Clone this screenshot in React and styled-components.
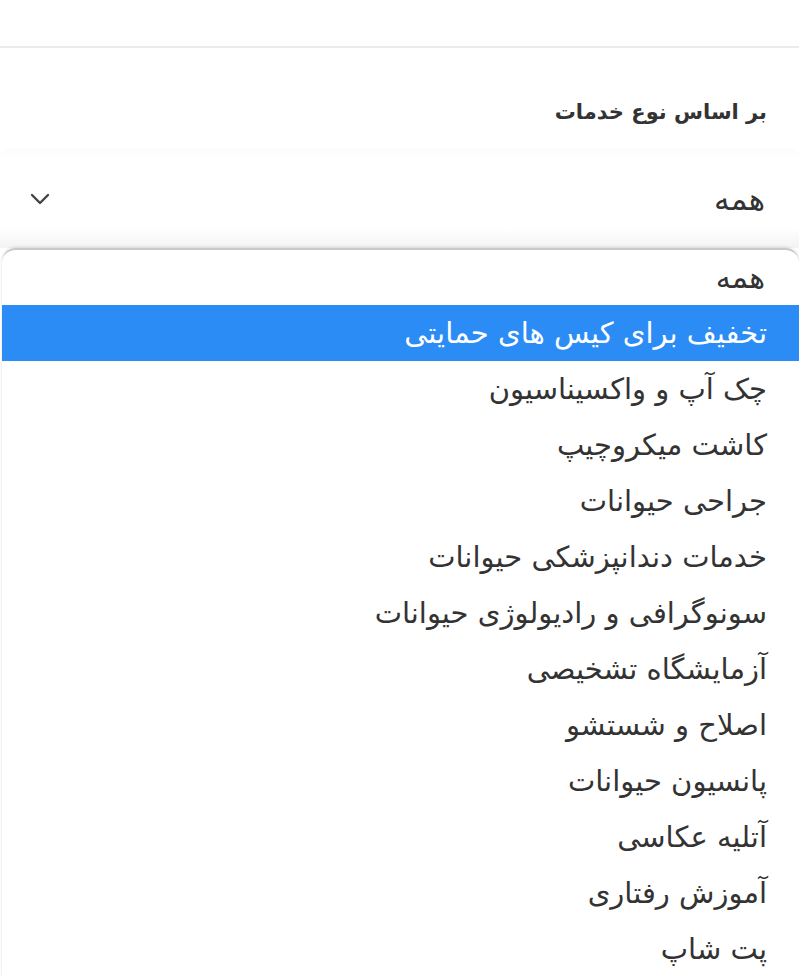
import React from "react";
import styled, { createGlobalStyle } from "styled-components";

const Global = createGlobalStyle`
  html, body { margin: 0; padding: 0; background: #fff; }
  body { font-family: "DejaVu Sans", "Noto Sans", sans-serif; direction: rtl; overflow: hidden; }
`;

const Page = styled.div`
  width: 799px;
  height: 977px;
  overflow: hidden;
  display: flex;
  flex-direction: column;
`;

const Divider = styled.div`
  margin-top: 46px;
  height: 2px;
  background: #ebebeb;
`;

const Label = styled.div`
  margin-top: 50px;
  padding-right: 32px;
  font-size: 21px;
  font-weight: bold;
  color: #333;
  line-height: 28px;
  height: 52px;
`;

const SelectBox = styled.div`
  height: 98px;
  display: flex;
  align-items: center;
  justify-content: space-between;
  padding: 0 34px 0 30px;
  background: linear-gradient(#fdfdfd 0%, #fff 10%, #fff 80%, #f3f3f3 100%);
  box-shadow: 0 -1px 2px rgba(0, 0, 0, 0.03);
  border-radius: 10px 10px 0 0;
`;

const SelectValue = styled.span`
  font-size: 31px;
  line-height: 1;
  color: #333;
`;

const Dropdown = styled.ul`
  list-style: none;
  margin: 0 0 0 2px;
  padding: 0;
  border-top: 2px solid #c9c9c9;
  border-radius: 14px 14px 0 0;
  background: #fff;
  box-shadow: 0 -1px 3px rgba(0, 0, 0, 0.12);
  flex: 1;
`;

const Option = styled.li`
  height: ${(p) => (p.$first ? "55px" : "56px")};
  display: flex;
  align-items: center;
  padding-right: ${(p) => (p.$first ? "34px" : "32px")};
  font-size: ${(p) => (p.$first ? "30px" : "29px")};
  color: ${(p) => (p.$active ? "#fff" : "#333")};
  background: ${(p) => (p.$active ? "#2b8cf6" : "transparent")};
  white-space: nowrap;
`;

const Chevron = () => (
  <svg width="20" height="12" viewBox="0 0 20 12">
    <path d="M2 2 L10 10 L18 2" fill="none" stroke="#444" strokeWidth="2.4" strokeLinecap="round" strokeLinejoin="round" />
  </svg>
);

const items = [
  "تخفیف برای کیس های حمایتی",
  "چک آپ و واکسیناسیون",
  "کاشت میکروچیپ",
  "جراحی حیوانات",
  "خدمات دندانپزشکی حیوانات",
  "سونوگرافی و رادیولوژی حیوانات",
  "آزمایشگاه تشخیصی",
  "اصلاح و شستشو",
  "پانسیون حیوانات",
  "آتلیه عکاسی",
  "آموزش رفتاری",
  "پت شاپ",
];

export default function App() {
  return (
    <Page>
      <Global />
      <Divider />
      <Label>بر اساس نوع خدمات</Label>
      <SelectBox>
        <SelectValue>همه</SelectValue>
        <Chevron />
      </SelectBox>
      <Dropdown>
        <Option $first>همه</Option>
        {items.map((t, i) => (
          <Option key={t} $active={i === 0}>
            {t}
          </Option>
        ))}
      </Dropdown>
    </Page>
  );
}
